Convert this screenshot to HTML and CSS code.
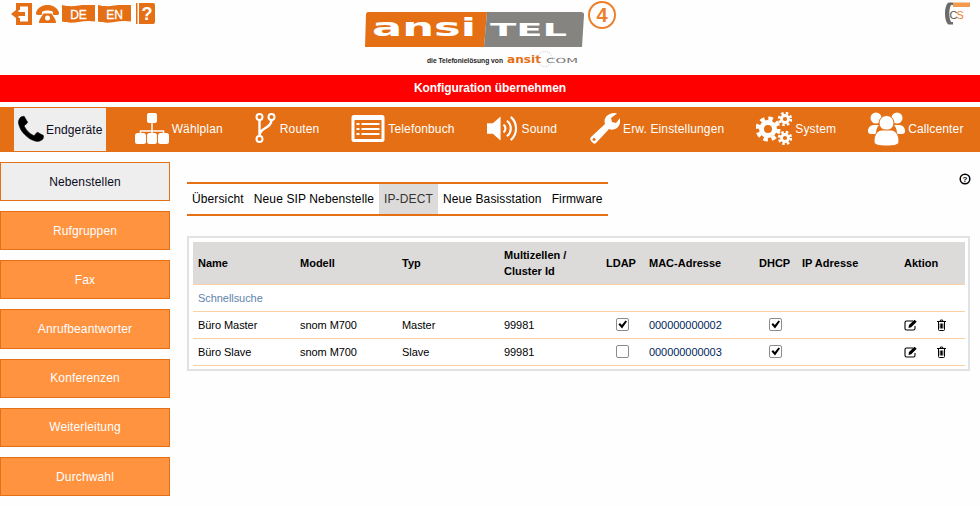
FILE: index.html
```html
<!DOCTYPE html>
<html lang="de">
<head>
<meta charset="utf-8">
<title>ansitel</title>
<link rel="stylesheet" href="styles.css">
</head>
<body>
<header class="top">
  <div class="quick">
    <svg class="q-exit" viewBox="0 0 21 22"><path d="M5 0H21V22H5V15H9V18.500H17V3.500H9V7H5z"/><path d="M0 11 7.500 5V9H14V13H7.500V17z"/></svg>
    <svg class="q-phone" viewBox="0 0 23 18"><path d="M0 7.500C2 1.500 8 0 11.500 0S21 1.500 23 7.500c.3 1.500-.3 2.500-1.500 2.500h-3c-1 0-1.500-.5-1.500-1.500V7c-1-1-3-1.500-5.500-1.500S7 6 6 7v1.500C6 9.500 5.500 10 4.500 10h-3C.3 10-.3 9 0 7.500z"/><path d="M3 17.500C3 14 6 11 7.500 8.500h8C17 11 20 14 20 17.500c0 .4-.2.5-.5.5h-16c-.3 0-.5-.1-.5-.5z"/><circle class="hole" cx="11.500" cy="13" r="2.500"/></svg>
    <svg class="q-flag" viewBox="0 0 33 18"><path d="M0 0c6 1.500 11 1.500 16.500.5S27 0 33 0v16.500c-6-1-11-.5-16.500.5S6 18 0 16.500z"/><text x="16.500" y="13.500" text-anchor="middle">DE</text></svg>
    <svg class="q-flag" viewBox="0 0 33 18"><path d="M0 0c6 1.500 11 1.500 16.500.5S27 0 33 0v16.500c-6-1-11-.5-16.500.5S6 18 0 16.500z"/><text x="16.500" y="13.500" text-anchor="middle">EN</text></svg>
    <svg class="q-help" viewBox="0 0 19 21"><path d="M0 0h1.500v21H0zM3 0h14a2 2 0 0 1 2 2v17a2 2 0 0 1-2 2H3z"/><text x="11" y="17" text-anchor="middle">?</text></svg>
  </div>
  <svg class="logo" viewBox="0 0 260 70">
    <path class="lg-o" d="M6 14.500Q6 12 8 12H127L124 47H5z"/>
    <path class="lg-g" d="M127 12H221q3 0 3 2.500L222 47H124z"/>
    <text class="lg-a" x="12" y="36" textLength="104" lengthAdjust="spacingAndGlyphs">ansi</text>
    <text class="lg-t" x="130" y="36" textLength="77" lengthAdjust="spacingAndGlyphs">TEL</text>
    <circle class="lg-c" cx="242" cy="15" r="13"/>
    <text class="lg-4" x="242" y="22" text-anchor="middle">4</text>
    <text class="lg-s" x="67" y="63" textLength="76" lengthAdjust="spacingAndGlyphs">die Telefonielösung von</text>
    <text class="lg-x" x="147" y="63" textLength="34" lengthAdjust="spacingAndGlyphs">ansit</text>
    <text class="lg-y" x="186" y="63" textLength="32" lengthAdjust="spacingAndGlyphs">COM</text>
    <circle class="lg-d" cx="185" cy="59" r="7.500"/>
  </svg>
  <svg class="cs" viewBox="0 0 26 24">
    <path class="cs-h" d="M3.500 .5C1 2 0 7 0 11.500s1 9.500 3.500 11H8V20H6C4.800 17.500 4.300 14.500 4.300 11.500S4.800 5.500 6 3H8V.5z"/>
    <path class="cs-b" d="M8 .5h17v4.500H8z"/>
    <text class="cs-c" x="4.500" y="16.500">C</text><text class="cs-s" x="11.500" y="16.500">S</text>
  </svg>
</header>

<div class="apply">Konfiguration übernehmen</div>

<nav class="nav">
  <a class="nav-item active">
    <svg class="i-end" viewBox="0 0 1792 1792"><path d="M1600 1240q0 27-10 70.500t-21 68.500q-21 50-122 106-94 51-186 51-27 0-53-3.500t-57.500-12.500-47-14.500-55.500-20.500-49-18q-98-35-175-83-127-79-264-216t-216-264q-48-77-83-175-3-9-18-49t-20.500-55.500-14.500-47-12.500-57.500-3.500-53q0-92 51-186 56-101 106-122 25-11 68.500-21t70.500-10q14 0 21 3 18 6 53 76 11 19 30 54t35 63.500 31 53.500q3 4 17.500 25t21.500 35.500 7 28.500q0 20-28.500 50t-62 55-62 53-28.500 46q0 9 5 22.500t8.500 20.500 14 24 11.500 19q76 137 174 235t235 174q2 1 19 11.500t24 14 20.500 8.500 22.500 5q18 0 46-28.500t53-62 55-62 50-28.500q14 0 28.500 7t35.500 21.500 25 17.500q25 15 53.500 31t63.500 35 54 30q70 35 76 53 3 7 3 21z"/></svg>
    <span>Endgeräte</span>
  </a>
  <a class="nav-item">
    <svg class="i-plan" viewBox="0 0 35 31"><path class="ln" d="M18 9v16M6.500 25v-7h23v7"/><rect x="13" y="0" width="10" height="10" rx="2"/><rect x="1" y="20" width="11" height="11" rx="2.500"/><rect x="13" y="20" width="10" height="11" rx="2.500"/><rect x="24" y="20" width="11" height="11" rx="2.500"/></svg>
    <span>Wählplan</span>
  </a>
  <a class="nav-item">
    <svg class="i-route" viewBox="0 0 21 31"><path class="wire" d="M4 7v18M16 7c0 9-12 7-12 16"/><circle class="node" cx="4" cy="4" r="3"/><circle class="node" cx="16" cy="4" r="3"/><circle class="node" cx="4" cy="26" r="3"/></svg>
    <span>Routen</span>
  </a>
  <a class="nav-item">
    <svg class="i-book" viewBox="0 0 33 27"><path fill-rule="evenodd" d="M2.500 0h28A2.500 2.500 0 0 1 33 2.500v22a2.500 2.500 0 0 1-2.500 2.500h-28A2.500 2.500 0 0 1 0 24.500v-22A2.500 2.500 0 0 1 2.500 0zM3 5v19h27V5z"/><path d="M5 8h3v2H5zM10 8h18v2H10zM5 13h3v2H5zM10 13h18v2H10zM5 18h3v2H5zM10 18h18v2H10z"/></svg>
    <span>Telefonbuch</span>
  </a>
  <a class="nav-item">
    <svg class="i-sound" viewBox="0 0 33 27"><path d="M0 8h6l8-7v25l-8-7H0z"/><path class="arc" d="M17 9.500a5 5 0 0 1 0 8M20.500 5.500a10 10 0 0 1 0 16M24.500 1.500a16 16 0 0 1 0 24"/></svg>
    <span>Sound</span>
  </a>
  <a class="nav-item">
    <svg class="i-wrench" viewBox="0 0 31 31"><path fill-rule="evenodd" d="M2 24 16 11C14 5 19 0 25 0c1.500 0 2.500.3 3 .5L22 5l1 4 4 1 4-5c1 4-.5 8-3 10-3 2-6 2-8 1L7 30c-1 1-2 1-3 0l-2-2c-1-1-1-3 0-4zM5 25a1.500 1.500 0 1 0 .1 0z"/></svg>
    <span>Erw. Einstellungen</span>
  </a>
  <a class="nav-item">
    <svg class="i-gear" viewBox="0 0 36 33">
      <circle class="teeth t-b" cx="12" cy="17" r="10.500"/><circle class="ring r-b" cx="12" cy="17" r="6.500"/>
      <circle class="teeth t-s" cx="29" cy="7" r="5.800"/><circle class="ring r-s" cx="29" cy="7" r="3.500"/>
      <circle class="teeth t-s" cx="29" cy="26" r="5.800"/><circle class="ring r-s" cx="29" cy="26" r="3.500"/>
    </svg>
    <span>System</span>
  </a>
  <a class="nav-item">
    <svg class="i-people" viewBox="0 0 37 34"><circle cx="8" cy="6" r="5.500"/><circle cx="29" cy="6" r="5.500"/><path d="M0 19c0-4 3-6 6-6h5c-2 2-3 5-3 9H3c-2 0-3-1-3-3zM37 19c0-4-3-6-6-6h-5c2 2 3 5 3 9h5c2 0 3-1 3-3z"/><circle class="p-c" cx="18.500" cy="11" r="7.500"/><path class="p-c" d="M6 29c0-7 4-11 8-11h9c4 0 8 4 8 11 0 4-4 5-12.500 5S6 33 6 29z"/></svg>
    <span>Callcenter</span>
  </a>
</nav>

<div class="page">
  <aside class="side">
    <a class="side-btn current">Nebenstellen</a>
    <a class="side-btn">Rufgruppen</a>
    <a class="side-btn">Fax</a>
    <a class="side-btn">Anrufbeantworter</a>
    <a class="side-btn">Konferenzen</a>
    <a class="side-btn">Weiterleitung</a>
    <a class="side-btn">Durchwahl</a>
  </aside>
  <main class="main">
    <div class="help-row">
      <svg class="help" viewBox="0 0 12 12"><circle cx="6" cy="6" r="4.800"/><text x="6" y="9" text-anchor="middle">?</text></svg>
    </div>
    <div class="tabs">
      <a class="tab">Übersicht</a>
      <a class="tab">Neue SIP Nebenstelle</a>
      <a class="tab on">IP-DECT</a>
      <a class="tab">Neue Basisstation</a>
      <a class="tab">Firmware</a>
    </div>
    <section class="panel">
      <table class="grid">
        <colgroup>
          <col class="c102"><col class="c102"><col class="c102"><col class="c102"><col class="c43"><col class="c110"><col class="c43"><col class="c102"><col class="c66">
        </colgroup>
        <thead>
          <tr><th>Name</th><th>Modell</th><th>Typ</th><th>Multizellen /<br>Cluster Id</th><th>LDAP</th><th>MAC-Adresse</th><th>DHCP</th><th>IP Adresse</th><th>Aktion</th></tr>
        </thead>
        <tbody>
          <tr class="search"><td colspan="9">Schnellsuche</td></tr>
          <tr>
            <td>Büro Master</td><td>snom M700</td><td>Master</td><td>99981</td>
            <td class="mid"><span class="cb"><svg viewBox="0 0 13 13"><path d="M2.500 6.500 4 5l1.800 2L9.500 2.500 11 3.500 6 10.500z"/></svg></span></td>
            <td class="mac">000000000002</td>
            <td class="mid"><span class="cb"><svg viewBox="0 0 13 13"><path d="M2.500 6.500 4 5l1.800 2L9.500 2.500 11 3.500 6 10.500z"/></svg></span></td>
            <td></td>
            <td><div class="acts">
              <svg class="a-edit" viewBox="0 0 14 12"><path class="e-box" d="M9 2H2.500A1.500 1.500 0 0 0 1 3.500v6A1.500 1.500 0 0 0 2.500 11h7A1.500 1.500 0 0 0 11 9.500V7"/><path d="M5 6 10.500.8l2.200 2L7.200 8.200 4.500 9z"/></svg>
              <svg class="a-trash" viewBox="0 0 13 12"><path class="t-line" d="M1 2.500h9M4 2.500 4.500 1h2L7 2.500M2.500 2.500V10.500q0 1 1 1h4q1 0 1-1V2.500M4.200 4.500v5M5.500 4.500v5M6.800 4.500v5"/></svg>
            </div></td>
          </tr>
          <tr>
            <td>Büro Slave</td><td>snom M700</td><td>Slave</td><td>99981</td>
            <td class="mid"><span class="cb"></span></td>
            <td class="mac">000000000003</td>
            <td class="mid"><span class="cb"><svg viewBox="0 0 13 13"><path d="M2.500 6.500 4 5l1.800 2L9.500 2.500 11 3.500 6 10.500z"/></svg></span></td>
            <td></td>
            <td><div class="acts">
              <svg class="a-edit" viewBox="0 0 14 12"><path class="e-box" d="M9 2H2.500A1.500 1.500 0 0 0 1 3.500v6A1.500 1.500 0 0 0 2.500 11h7A1.500 1.500 0 0 0 11 9.500V7"/><path d="M5 6 10.500.8l2.200 2L7.200 8.200 4.500 9z"/></svg>
              <svg class="a-trash" viewBox="0 0 13 12"><path class="t-line" d="M1 2.500h9M4 2.500 4.500 1h2L7 2.500M2.500 2.500V10.500q0 1 1 1h4q1 0 1-1V2.500M4.200 4.500v5M5.500 4.500v5M6.800 4.500v5"/></svg>
            </div></td>
          </tr>
        </tbody>
      </table>
    </section>
  </main>
</div>
</body>
</html>
```
FILE: styles.css
```css
* { box-sizing: border-box; }
html, body { margin: 0; padding: 0; }
body {
  width: 980px;
  height: 506px;
  overflow: hidden;
  background: #fefefe;
  font-family: "Liberation Sans", Arial, sans-serif;
  font-size: 12px;
  color: #000;
}

/* header */
.top {
  display: grid;
  grid-template-columns: 360px 260px 1fr;
  height: 75px;
}
.quick {
  display: flex;
  align-items: flex-start;
  padding: 3px 0 0 11px;
}
.quick svg { fill: #e56f15; display: block; }
.q-exit { width: 21px; height: 22px; }
.q-phone { width: 23px; height: 18px; margin: 2px 0 0 4px; }
.q-phone .hole { fill: #fefefe; }
.q-flag { width: 33px; height: 18px; margin: 2px 0 0 3px; }
.q-flag text {
  fill: #fff;
  stroke: #fff;
  stroke-width: .3;
  font: 12px "Liberation Sans", Arial, sans-serif;
}
.q-help { width: 19px; height: 21px; margin: 0 0 0 5px; }
.q-help text {
  fill: #fff;
  font: bold 18px "Liberation Sans", Arial, sans-serif;
}
.logo { width: 260px; height: 70px; display: block; }
.lg-o { fill: #e56f15; }
.lg-g { fill: #858481; }
.lg-a { fill: #fff; font: bold 25px "DejaVu Sans", sans-serif; }
.lg-t { fill: #fff; font: bold 18px "DejaVu Sans", sans-serif; }
.lg-c { fill: none; stroke: #ee7f2a; stroke-width: 2; }
.lg-4 { fill: #ee7f2a; font: bold 20px "Liberation Sans", Arial, sans-serif; }
.lg-s { fill: #222; font: bold 7px "Liberation Sans", Arial, sans-serif; }
.lg-x { fill: #e56f15; font: bold 10px "DejaVu Sans", sans-serif; }
.lg-y { fill: #777; font: 7px "DejaVu Sans", sans-serif; }
.lg-d { fill: none; stroke: #999; stroke-width: .6; stroke-dasharray: 1 1.500; }
.cs { width: 26px; height: 24px; margin: 2px 0 0 325px; display: block; }
.cs-h { fill: #6b6b6b; }
.cs-b { fill: #f39a4e; }
.cs-c { fill: #555; font: 11px "Liberation Sans", Arial, sans-serif; }
.cs-s { fill: #ee7f2a; font: 11px "Liberation Sans", Arial, sans-serif; }

.apply {
  height: 27px;
  line-height: 27px;
  background: #fe0000;
  color: #fff;
  font-weight: bold;
  letter-spacing: -.08px;
  text-align: center;
}

/* main navigation */
.nav {
  display: flex;
  gap: 28px;
  height: 45px;
  margin-top: 5px;
  padding-left: 14px;
  background: #e56f15;
  color: #fff;
  letter-spacing: .14px;
}
.nav-item {
  display: flex;
  align-items: center;
  padding: 0 4px 2px 0;
  white-space: nowrap;
}
.nav-item span { margin-left: 3px; }
.nav-item svg { display: block; fill: #fff; flex: none; }
.nav-item.active {
  margin: 1px 0;
  padding: 0 3px 0 2px;
  background: #eee;
  color: #0b0b1c;
}
.i-end { width: 32px; height: 32px; margin-left: -1px; margin-right: -4px; fill: #000 !important; stroke: #000; stroke-width: 30; }
.i-plan { width: 35px; height: 31px; }
.ln { fill: none; stroke: #fff; stroke-width: 1.500; }
.i-route { width: 22px; height: 31px; }
.wire { fill: none; stroke: #fff; stroke-width: 2.400; }
.node { fill: #e56f15; stroke: #fff; stroke-width: 2; }
.i-book { width: 34px; height: 27px; }
.i-sound { width: 32px; height: 27px; }
.arc { fill: none; stroke: #fff; stroke-width: 2.200; }
.i-wrench { width: 31px; height: 31px; }
.i-gear { width: 36px; height: 33px; }
.teeth { fill: none; stroke: #fff; }
.t-b { stroke-width: 4; stroke-dasharray: 4.500 3.750; }
.t-s { stroke-width: 2.800; stroke-dasharray: 2.500 2.060; }
.ring { fill: none; stroke: #fff; }
.r-b { stroke-width: 5; }
.r-s { stroke-width: 2.800; }
.i-people { width: 37px; height: 34px; }
.p-c { stroke: #e56f15; stroke-width: 1; }

/* page body */
.page { display: flex; }
.side {
  display: flex;
  flex-direction: column;
  gap: 10px;
  width: 170px;
  padding-top: 10px;
}
.side-btn {
  display: flex;
  align-items: center;
  justify-content: center;
  height: 39.170px;
  background: #ff9340;
  border: 1px solid #e56f15;
  color: #fff;
  letter-spacing: .14px;
}
.side-btn.current { background: #eee; color: #0b0b1c; }

.main { width: 783px; margin-left: 17px; padding-top: 21px; }
.help-row { display: flex; justify-content: flex-end; height: 9px; margin-right: -1px; }
.help { width: 12px; height: 12px; display: block; flex: none; }
.help circle { fill: none; stroke: #000; stroke-width: 1.500; }
.help text { font: bold 8px "Liberation Sans", Arial, sans-serif; }

.tabs {
  display: inline-flex;
  border-top: 2px solid #e56f15;
  border-bottom: 2px solid #e56f15;
  height: 34px;
  vertical-align: top;
  letter-spacing: .12px;
}
.tab { padding: 0 5px; line-height: 30px; }
.tab.on { background: #dcdbda; color: #333; }

.panel {
  margin-top: 20px;
  padding: 4px 3px 3px 4px;
  border: 2px solid #e2e2e2;
  background: #fff;
}
.grid { width: 772px; table-layout: fixed; border-collapse: collapse; font-size: 11px; }
.c102 { width: 102px; }
.c43 { width: 43px; }
.c110 { width: 110px; }
.c66 { width: 66px; }
.grid th {
  height: 42px;
  padding: 0 5px;
  background: #dcdbda;
  border-bottom: 1px solid #fdcfa6;
  text-align: left;
  font-weight: bold;
  line-height: 16px;
}
.grid td {
  height: 27px;
  padding: 0 5px;
  border-bottom: 1px solid #fdcfa6;
  letter-spacing: -.06px;
}
.search td { height: 27px; color: #5f84ad; }
.mac { color: #00265c; }
.mid { text-align: center; }
.cb {
  display: inline-block;
  width: 13px;
  height: 13px;
  border: 1px solid #8c8c8c;
  border-radius: 2px;
  background: #fff;
  vertical-align: middle;
}
.cb svg { display: block; width: 13px; height: 13px; margin: -1px; fill: #000; }
.acts { display: flex; align-items: center; gap: 18px; }
.acts svg { display: block; fill: #000; }
.a-edit { width: 14px; height: 12px; }
.a-trash { width: 13px; height: 12px; }
.e-box { fill: none; stroke: #000; stroke-width: 1.100; }
.acts .t-line { fill: none; stroke: #000; stroke-width: 1; }
```
